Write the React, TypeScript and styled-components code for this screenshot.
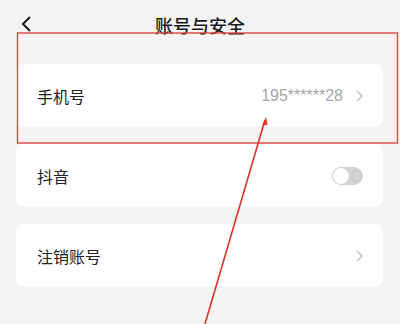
import React from 'react'
import styled, { createGlobalStyle } from 'styled-components'

const GlobalStyle = createGlobalStyle`
  html, body {
    margin: 0;
    padding: 0;
    background: #f4f4f4;
  }
  body {
    font-family: "Noto Sans CJK SC", "Noto Sans", sans-serif;
  }
`

const Page = styled.div`
  position: relative;
  width: 400px;
  height: 324px;
  overflow: hidden;
  background: #f4f4f4;
`

const Header = styled.div`
  height: 50px;
  display: flex;
  align-items: center;
  justify-content: center;
  position: relative;
`

const BackButton = styled.div`
  position: absolute;
  left: 19px;
  top: 15px;
  width: 16px;
  height: 18px;
  display: flex;
`

const Title = styled.h1`
  margin: 0;
  font-size: 18px;
  font-weight: 500;
  color: #1a1a1a;
`

const List = styled.div`
  display: flex;
  flex-direction: column;
  gap: 17px;
  padding: 14px 17px 0 16px;
`

const Card = styled.div`
  height: 63px;
  background: #fff;
  border-radius: 8px;
  display: flex;
  align-items: center;
  padding: 0 20px 0 21px;
`

const Label = styled.span`
  flex: 1;
  font-size: 16px;
  color: #222;
`

const Value = styled.span`
  font-family: "Liberation Sans", "Noto Sans", sans-serif;
  font-size: 16px;
  color: #a6a6a6;
  margin-right: 13px;
`

const Switch = styled.div<{ on?: boolean }>`
  width: 31px;
  height: 18px;
  border-radius: 9px;
  background: ${p => (p.on ? '#fe2c55' : '#d2d2d2')};
  position: relative;
  &::after {
    content: '';
    position: absolute;
    top: 1px;
    left: ${p => (p.on ? '14px' : '1px')};
    width: 16px;
    height: 16px;
    border-radius: 50%;
    background: #fff;
    box-shadow: 0 0 0 0.5px #c4c4c4;
  }
`

const Overlay = styled.svg`
  position: absolute;
  left: 0;
  top: 0;
  pointer-events: none;
`

const Chevron = () => (
  <svg width="7" height="12" viewBox="0 0 7 12">
    <path d="M1 1l5 5-5 5" fill="none" stroke="#bdbdbd" strokeWidth="1.3" />
  </svg>
)

export default function App() {
  return (
    <Page>
      <GlobalStyle />
      <Header>
        <BackButton>
          <svg width="16" height="18" viewBox="0 0 16 18">
            <path d="M11 2L4 9l7 7" fill="none" stroke="#1a1a1a" strokeWidth="2" />
          </svg>
        </BackButton>
        <Title>账号与安全</Title>
      </Header>
      <List>
        <Card>
          <Label>手机号</Label>
          <Value>195******28</Value>
          <Chevron />
        </Card>
        <Card>
          <Label>抖音</Label>
          <Switch />
        </Card>
        <Card>
          <Label>注销账号</Label>
          <Chevron />
        </Card>
      </List>
      <Overlay width="400" height="324" viewBox="0 0 400 324">
        <rect x="17.5" y="33" width="380" height="110" fill="none" stroke="#e0453e" strokeWidth="1.4" />
        <line x1="265" y1="120" x2="205" y2="324" stroke="#d9342b" strokeWidth="1.6" />
        <path d="M266 117l-3.5 8h5z" fill="#d9342b" />
      </Overlay>
    </Page>
  )
}
